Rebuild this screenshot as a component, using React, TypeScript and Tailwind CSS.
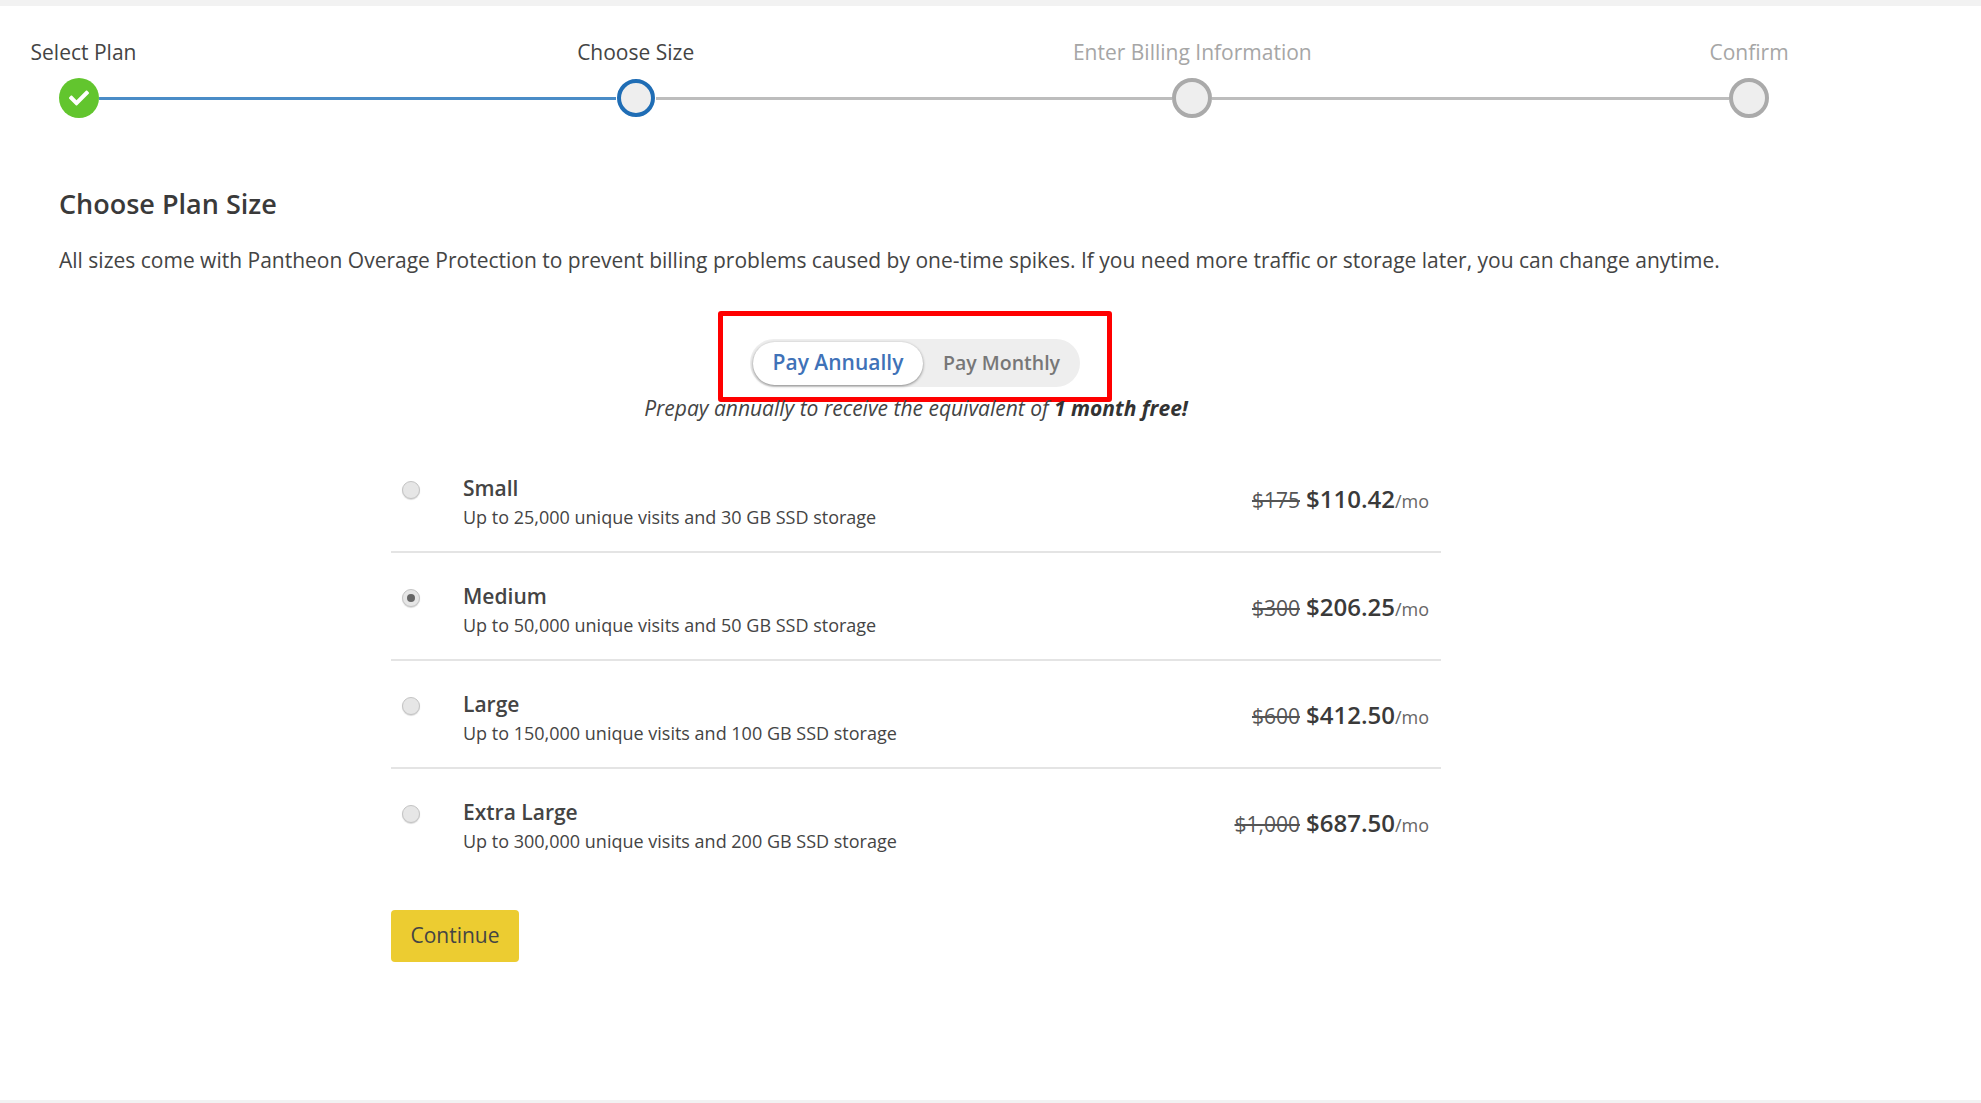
import { FaCheck } from "react-icons/fa";

const plans = [
  { name: "Small", desc: "Up to 25,000 unique visits and 30 GB SSD storage", old: "$175", price: "$110.42" },
  { name: "Medium", desc: "Up to 50,000 unique visits and 50 GB SSD storage", old: "$300", price: "$206.25", selected: true },
  { name: "Large", desc: "Up to 150,000 unique visits and 100 GB SSD storage", old: "$600", price: "$412.50" },
  { name: "Extra Large", desc: "Up to 300,000 unique visits and 200 GB SSD storage", old: "$1,000", price: "$687.50" },
];

function Step({ label, muted, className, children }: { label: string; muted?: boolean; className?: string; children: React.ReactNode }) {
  return (
    <div className="flex w-10 shrink-0 flex-col items-center">
      <span className={`mb-3 whitespace-nowrap text-[21px] leading-7 ${muted ? "text-[#a6a6a6]" : "text-[#444]"} ${className ?? ""}`}>
        {label}
      </span>
      {children}
    </div>
  );
}

export default function App() {
  return (
    <div className="flex h-[1103px] w-full flex-col overflow-hidden bg-white font-['Open_Sans',sans-serif] text-[#333]">
      <div className="h-[6px] shrink-0 bg-[#f2f2f2]" />

      {/* Stepper */}
      <div className="mt-[32px] ml-[59px] flex w-[1710px] items-end">
        <Step label="Select Plan" className="ml-[9px]">
          <div className="flex h-10 w-10 items-center justify-center rounded-full bg-[#62c52e] text-white">
            <FaCheck className="text-[20px]" />
          </div>
        </Step>
        <div className="mb-[18px] h-[3px] flex-1 bg-[#4a8cc7]" />
        <Step label="Choose Size">
          <div className="my-px h-[38px] w-[38px] rounded-full border-4 border-[#1f6db5] bg-[#eee]" />
        </Step>
        <div className="mb-[18px] h-[3px] flex-1 bg-[#bdbdbd]" />
        <Step label="Enter Billing Information" muted>
          <div className="h-10 w-10 rounded-full border-4 border-[#aaa] bg-[#eee]" />
        </Step>
        <div className="mb-[18px] h-[3px] flex-1 bg-[#bdbdbd]" />
        <Step label="Confirm" muted>
          <div className="h-10 w-10 rounded-full border-4 border-[#aaa] bg-[#eee]" />
        </Step>
      </div>

      <h1 className="mt-[69px] ml-[59px] text-[27px] leading-[34px] font-semibold text-[#3a3a3a]">Choose Plan Size</h1>
      <p className="mt-[25px] ml-[59px] text-[21px] leading-7 text-[#444]">
        All sizes come with Pantheon Overage Protection to prevent billing problems caused by one-time spikes. If you need more traffic or storage later, you can change anytime.
      </p>

      <div className="ml-[391px] w-[1050px]">
        {/* Billing toggle */}
        <div className="mt-[37px] ml-[327px] h-[91px] w-[394px] rounded-[3px] border-[5px] border-[#ff0000] pt-[23px] pl-[27px]">
          <div className="flex h-12 w-[330px] items-center rounded-full bg-[#eee] pl-[3px]">
            <div className="flex h-[43px] w-[170px] items-center justify-center rounded-full bg-white text-[21px] font-semibold text-[#3f72b8] shadow-[0_1px_3px_rgba(0,0,0,0.45)]">
              Pay Annually
            </div>
            <div className="flex-1 text-center text-[19.5px] font-semibold text-[#777]">Pay Monthly</div>
          </div>
        </div>
        <p className="-mt-[6px] text-center text-[21px] leading-6 italic text-[#444]">
          Prepay annually to receive the equivalent of <b className="font-bold text-[#333]">1 month free!</b>
        </p>

        {/* Plans */}
        <div className="mt-[25px]">
          {plans.map((plan, i) => (
            <div key={plan.name} className={`flex h-[108px] pt-[31px] pr-[12px] pl-[11px] ${i < plans.length - 1 ? "border-b-2 border-[#e4e4e4]" : ""}`}>
              <div className="mt-[5px] flex h-[18px] w-[18px] items-center justify-center rounded-full border border-[#c4c4c4] bg-[#e6e6e6] shadow-[0_1px_1px_rgba(0,0,0,0.15)]">
                {plan.selected && <div className="h-2 w-2 rounded-full bg-[#666]" />}
              </div>
              <div className="ml-[43px] flex-1">
                <div className="text-[21px] leading-6 font-semibold text-[#444]">{plan.name}</div>
                <div className="mt-[5px] text-[18px] leading-6 text-[#444]">{plan.desc}</div>
              </div>
              <div className="mt-[5px] flex h-[30px] items-baseline gap-[6px] text-[#555]">
                <span className="text-[21px] line-through">{plan.old}</span>
                <span className="text-[24px] font-semibold text-[#3a3a3a]">
                  {plan.price}
                  <span className="text-[18px] font-normal text-[#666]">/mo</span>
                </span>
              </div>
            </div>
          ))}
        </div>

        <button className="mt-[33px] flex h-[52px] w-[128px] items-center justify-center rounded-[4px] bg-[#eccc31] text-[21px] text-[#444]">
          Continue
        </button>
      </div>

      <div className="mt-auto h-[3px] shrink-0 bg-[#f2f2f2]" />
    </div>
  );
}
